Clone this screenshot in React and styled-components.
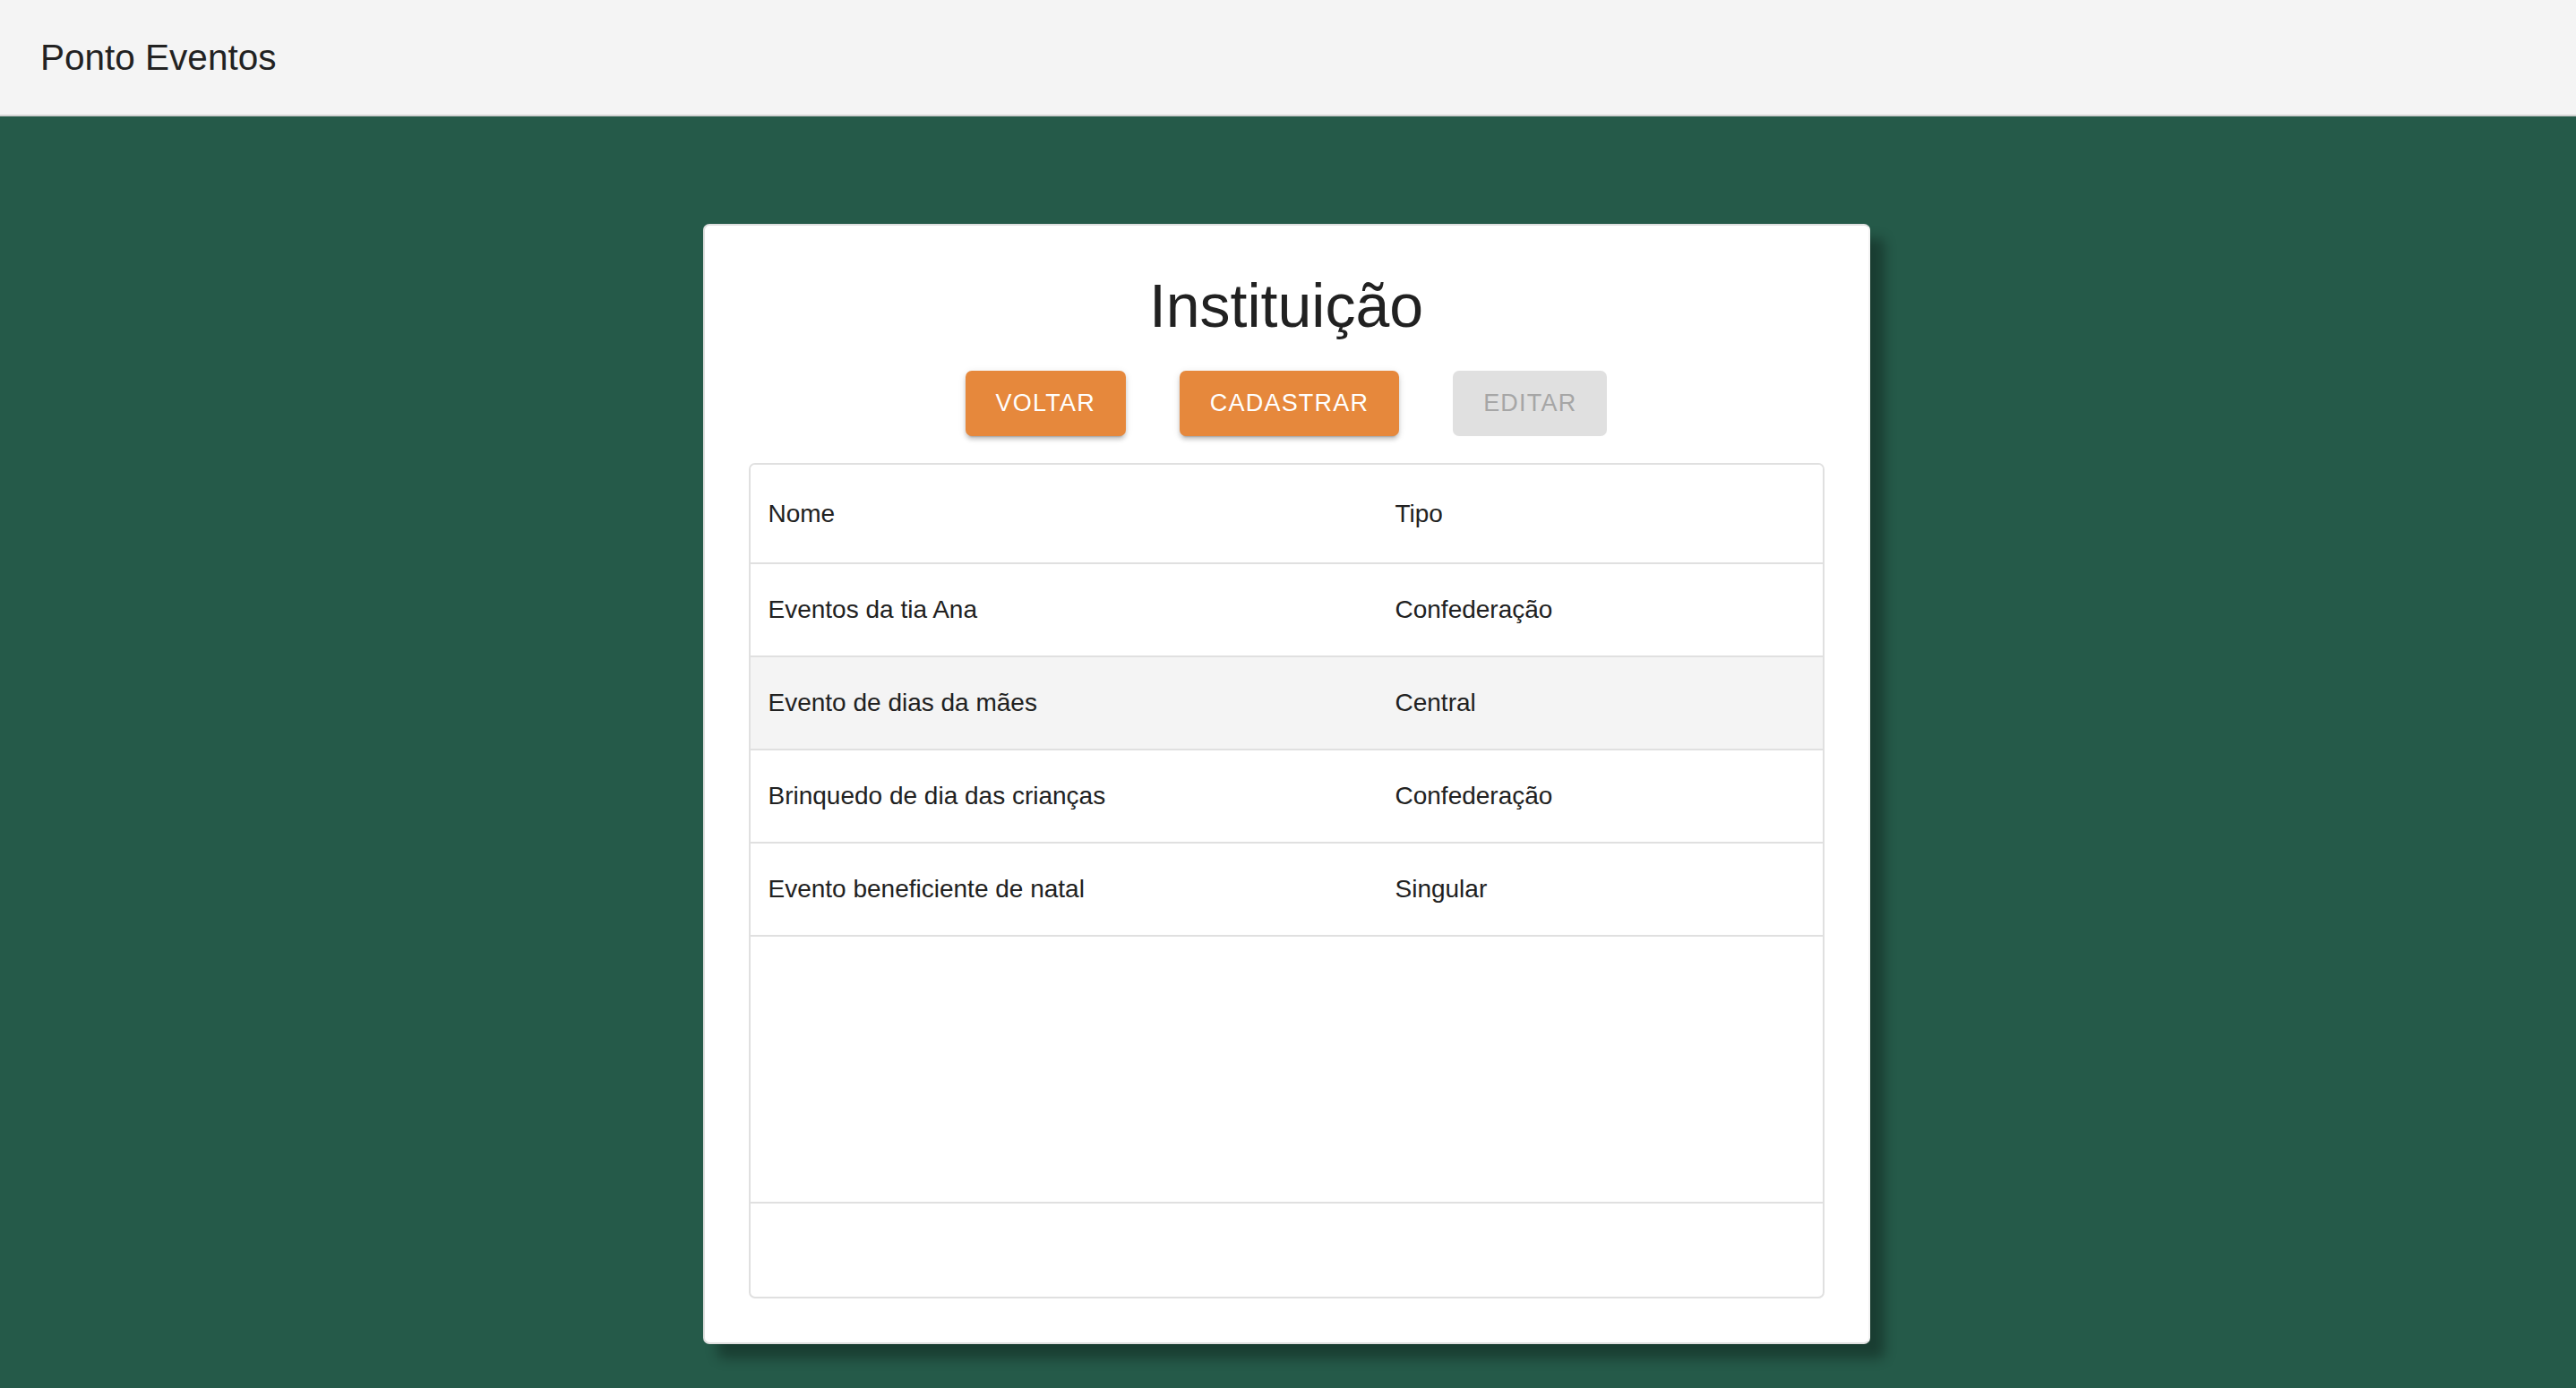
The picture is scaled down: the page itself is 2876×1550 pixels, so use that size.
import styled, { createGlobalStyle } from "styled-components";

const rows = [
    { nome: "Eventos da tia Ana", tipo: "Confederação" },
    { nome: "Evento de dias da mães", tipo: "Central", active: true },
    { nome: "Brinquedo de dia das crianças", tipo: "Confederação" },
    { nome: "Evento beneficiente de natal", tipo: "Singular" },
];

const App = () => {
    return (
        <>
            <GlobalStyle />
            <Page>
                <TopBar>
                    <Brand>Ponto Eventos</Brand>
                </TopBar>
                <Main>
                    <Card>
                        <Title>Instituição</Title>
                        <Actions>
                            <Button>VOLTAR</Button>
                            <Button>CADASTRAR</Button>
                            <Button disabled>EDITAR</Button>
                        </Actions>
                        <Grid>
                            <HeaderRow>
                                <Cell>Nome</Cell>
                                <Cell>Tipo</Cell>
                            </HeaderRow>
                            {rows.map((r) => (
                                <Row key={r.nome} $active={r.active}>
                                    <Cell>{r.nome}</Cell>
                                    <Cell>{r.tipo}</Cell>
                                </Row>
                            ))}
                            <Filler />
                            <Footer />
                        </Grid>
                    </Card>
                </Main>
            </Page>
        </>
    );
};

const GlobalStyle = createGlobalStyle`
    html, body {
        margin: 0;
        padding: 0;
        background: #255a49;
        font-family: "Liberation Sans", Arial, Helvetica, sans-serif;
        color: #212121;
    }
    * {
        box-sizing: border-box;
    }
`;

const Page = styled.div`
    min-height: 1550px;
    background: #255a49;
    display: flex;
    flex-direction: column;
`;

const TopBar = styled.header`
    height: 130px;
    background: #f4f4f4;
    border-bottom: 2px solid #d2d2d2;
    display: flex;
    align-items: center;
    padding-left: 45px;
`;

const Brand = styled.div`
    font-size: 40.5px;
    color: #222;
`;

const Main = styled.main`
    display: flex;
    justify-content: center;
    padding-top: 120px;
    padding-right: 4px;
`;

const Card = styled.div`
    width: 1303px;
    background: #fff;
    border: 2px solid #e0e0e0;
    border-right-color: #f4f4f4;
    border-radius: 7px;
    padding: 49px;
    box-shadow: 16px 16px 14px rgba(0, 0, 0, 0.32);
    display: flex;
    flex-direction: column;
    align-items: center;
`;

const Title = styled.h1`
    margin: 7px 0 0;
    font-size: 68px;
    line-height: 66px;
    font-weight: 400;
    color: #212121;
`;

const Actions = styled.div`
    display: flex;
    gap: 60px;
    margin-top: 40px;
`;

const Button = styled.button`
    height: 73px;
    padding: 0 34px;
    border: none;
    border-radius: 7px;
    font-family: inherit;
    font-size: 27px;
    letter-spacing: 1.2px;
    font-weight: 400;
    color: #fff;
    background: #e6883c;
    box-shadow: 0 5px 2px -4px rgba(0, 0, 0, 0.2), 0 4px 4px 0 rgba(0, 0, 0, 0.14),
        0 2px 9px 0 rgba(0, 0, 0, 0.12);
    cursor: pointer;

    &:disabled {
        background: #e0e0e0;
        color: #a6a6a6;
        box-shadow: none;
        cursor: default;
    }
`;

const Grid = styled.div`
    align-self: stretch;
    margin-top: 30px;
    border: 2px solid #e0e0e0;
    border-radius: 7px;
    display: flex;
    flex-direction: column;
    overflow: hidden;
`;

const Row = styled.div`
    display: grid;
    grid-template-columns: 700px 1fr;
    align-items: center;
    height: 104px;
    border-bottom: 2px solid #e0e0e0;
    background: ${(p) => (p.$active ? "#f4f4f4" : "#fff")};
    font-size: 28px;
`;

const HeaderRow = styled(Row)`
    height: 111px;
`;

const Cell = styled.div`
    padding: 0 20px;
    white-space: nowrap;
`;

const Filler = styled.div`
    height: 298px;
    border-bottom: 2px solid #e0e0e0;
`;

const Footer = styled.div`
    height: 104px;
`;

export default App;
